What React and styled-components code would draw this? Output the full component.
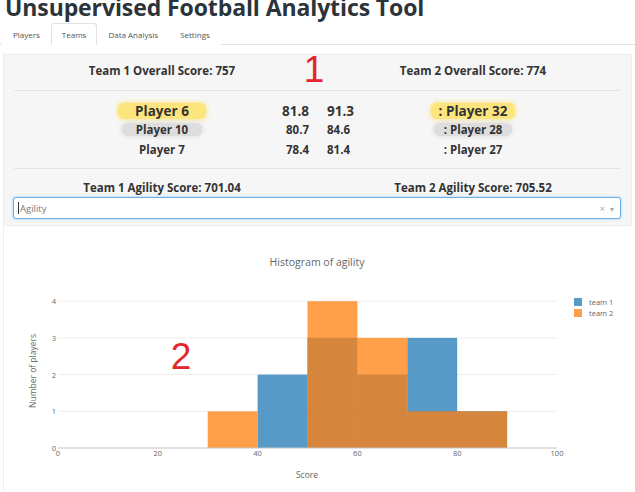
import styled, { createGlobalStyle } from 'styled-components';

const GlobalStyle = createGlobalStyle`
  body {
    margin: 0;
    background: #ffffff;
    font-family: 'Open Sans', 'Liberation Sans', sans-serif;
    color: #333;
    overflow: hidden;
  }
  * {
    box-sizing: border-box;
  }
`;

const Page = styled.div`
  width: 635px;
  height: 492px;
  overflow: hidden;
`;

const Title = styled.h1`
  margin: -7px 0 0 5px;
  font-size: 23px;
  line-height: 28px;
  font-weight: 700;
  letter-spacing: -0.1px;
  color: #2b333b;
  white-space: nowrap;
`;

const TabBar = styled.div`
  display: flex;
  margin-top: 2px;
  padding-left: 2px;
  border-bottom: 1px solid #e2e2e2;
`;

const Tab = styled.div`
  padding: 0 10px;
  height: 22px;
  line-height: 21px;
  font-size: 8px;
  color: #555;
  border: 1px solid ${p => (p.$active ? '#e2e2e2' : 'transparent')};
  border-bottom: none;
  border-radius: 3px 3px 0 0;
  background: #fff;
  margin-bottom: -1px;
`;

const Panel = styled.div`
  margin: 9px 3px 0 3px;
  background: #f6f6f6;
  border: 1px solid #ececec;
  padding: 0 10px 6px 10px;
`;

const ScoreGrid = styled.div`
  display: grid;
  grid-template-columns: 236px 38px 38px 234px;
  margin-left: 30px;
  align-items: center;
  height: ${p => p.$h}px;
  padding-top: ${p => p.$pt || 0}px;
  padding-bottom: ${p => p.$pb || 0}px;
`;

const TeamScore = styled.div`
  grid-column: ${p => p.$col};
  text-align: center;
  font-size: 11.5px;
  font-weight: 700;
  color: #333;
  white-space: nowrap;
`;

const Marker = styled.div`
  grid-column: 2 / span 2;
  text-align: center;
  font-family: 'Liberation Sans', sans-serif;
  font-size: 37px;
  line-height: 30px;
  color: #e4262c;
  margin-left: -8px;
`;

const Divider = styled.div`
  height: 1px;
  background: #e4e4e4;
`;

const PlayerBlock = styled.div`
  display: grid;
  grid-template-columns: 236px 38px 38px 234px;
  grid-template-rows: 19px 19.5px 19.5px;
  margin-left: 30px;
  padding: 10px 0 9px 0;
  align-items: center;
`;

const Cell = styled.div`
  font-size: ${p => (p.$big ? 13.5 : 11.5)}px;
  font-weight: 700;
  color: #333;
  text-align: ${p => p.$align || 'center'};
  padding: 0 ${p => (p.$align === 'right' ? 9 : 0)}px 0 ${p => (p.$align === 'left' ? 9 : 0)}px;
  white-space: nowrap;
`;

const Glow = styled.span`
  display: inline-block;
  padding: 0 ${p => p.$pad}px;
  line-height: ${p => (p.$big ? 16 : 13)}px;
  border-radius: 6px;
  background: ${p => (p.$tone === 'gold' ? '#fbe57c' : p.$tone === 'grey' ? '#dddddd' : 'transparent')};
  box-shadow: 0 0 4px 1px ${p => (p.$tone === 'gold' ? '#fbe88c' : p.$tone === 'grey' ? '#e2e2e2' : 'transparent')};
`;

const SelectBox = styled.div`
  display: flex;
  align-items: center;
  height: 22px;
  margin: 0 0 0 -1px;
  background: #fff;
  border: 1px solid #66afe9;
  border-radius: 3px;
  box-shadow: 0 0 3px rgba(102, 175, 233, 0.6);
  padding: 0 6px 0 4px;
  font-size: 9.5px;
  color: #777;
`;

const Caret = styled.span`
  width: 1px;
  height: 12px;
  background: #333;
  margin-right: 1px;
`;

const Grow = styled.span`
  flex: 1;
`;

const SelectIcon = styled.span`
  color: #aaa;
  font-size: ${p => p.$size}px;
  margin-left: 5px;
`;

const ChartCard = styled.div`
  margin: 1px 3px 0 3px;
  height: 266px;
  border-left: 1px solid #eeeeee;
  background: #fff;
`;

const players = [
  { left: 'Player 6', a: '81.8', b: '91.3', right: ': Player 32', tone: 'gold', big: true },
  { left: 'Player 10', a: '80.7', b: '84.6', right: ': Player 28', tone: 'grey' },
  { left: 'Player 7', a: '78.4', b: '81.4', right: ': Player 27', tone: 'none' },
];

const X0 = 58;
const XU = 4.99;
const Y0 = 449;
const YU = 36.7;

const team1 = [[40, 2], [50, 3], [60, 2], [70, 3], [80, 1]];
const team2 = [[30, 1], [50, 4], [60, 3], [70, 1], [80, 1]];

function Bars({ data, color }) {
  return data.map(([start, n]) => (
    <rect
      key={start}
      x={X0 + start * XU}
      y={Y0 - n * YU}
      width={10 * XU}
      height={n * YU}
      fill={color}
      opacity="0.75"
    />
  ));
}

function Histogram() {
  const axisText = { fontFamily: 'Open Sans, sans-serif', fill: '#666' };
  return (
    <svg width="628" height="264" viewBox="4 228 628 264">
      <text x="317" y="267" textAnchor="middle" fontSize="10.5" style={axisText} fill="#444">
        Histogram of agility
      </text>
      {[1, 2, 3, 4].map(k => (
        <line key={k} x1={X0} x2={X0 + 100 * XU} y1={Y0 - k * YU} y2={Y0 - k * YU} stroke="#eeeeee" strokeWidth="1" />
      ))}
      {[0, 1, 2, 3, 4].map(k => (
        <text key={k} x="56" y={Y0 - k * YU + 3} textAnchor="end" fontSize="7.5" style={axisText}>
          {k}
        </text>
      ))}
      <Bars data={team1} color="#1f77b4" />
      <Bars data={team2} color="#ff7f0e" />
      <line x1={X0} x2={X0 + 100 * XU} y1={Y0} y2={Y0} stroke="#c4c4c4" strokeWidth="1" />
      {[0, 20, 40, 60, 80, 100].map(v => (
        <text key={v} x={X0 + v * XU} y="457" textAnchor="middle" fontSize="7.5" style={axisText}>
          {v}
        </text>
      ))}
      <text x="307" y="479" textAnchor="middle" fontSize="8.5" style={axisText}>
        Score
      </text>
      <text
        x="0"
        y="0"
        transform="translate(36 372) rotate(-90)"
        textAnchor="middle"
        fontSize="8.5"
        style={axisText}
      >
        Number of players
      </text>
      <rect x="574" y="299" width="8" height="8" fill="#1f77b4" opacity="0.75" />
      <rect x="574" y="310" width="8" height="8" fill="#ff7f0e" opacity="0.75" />
      <text x="589" y="306" fontSize="7.5" style={axisText}>team 1</text>
      <text x="589" y="317" fontSize="7.5" style={axisText}>team 2</text>
      <text x="181" y="370" textAnchor="middle" fontSize="37" fontFamily="Liberation Sans, sans-serif" fill="#e4262c">
        2
      </text>
    </svg>
  );
}

export default function App() {
  return (
    <Page>
      <GlobalStyle />
      <Title>Unsupervised Football Analytics Tool</Title>
      <TabBar>
        <Tab>Players</Tab>
        <Tab $active>Teams</Tab>
        <Tab>Data Analysis</Tab>
        <Tab>Settings</Tab>
      </TabBar>

      <Panel>
        <ScoreGrid $h={35} $pb={5}>
          <TeamScore $col={1}>Team 1 Overall Score: 757</TeamScore>
          <Marker>1</Marker>
          <TeamScore $col={4}>Team 2 Overall Score: 774</TeamScore>
        </ScoreGrid>
        <Divider />
        <PlayerBlock>
          {players.map(p => (
            <>
              <Cell key={p.left} $big={p.big}>
                <Glow $tone={p.tone} $big={p.big} $pad={p.big ? 17 : 14}>{p.left}</Glow>
              </Cell>
              <Cell $big={p.big} $align="right">{p.a}</Cell>
              <Cell $big={p.big} $align="left">{p.b}</Cell>
              <Cell $big={p.big}>
                <Glow $tone={p.tone} $big={p.big} $pad={p.big ? 8 : 10}>{p.right}</Glow>
              </Cell>
            </>
          ))}
        </PlayerBlock>
        <Divider />
        <ScoreGrid $h={28} $pt={8}>
          <TeamScore $col={1}>Team 1 Agility Score: 701.04</TeamScore>
          <TeamScore $col={4}>Team 2 Agility Score: 705.52</TeamScore>
        </ScoreGrid>
        <SelectBox>
          <Caret />
          Agility
          <Grow />
          <SelectIcon $size={9}>×</SelectIcon>
          <SelectIcon $size={8}>▾</SelectIcon>
        </SelectBox>
      </Panel>

      <ChartCard>
        <Histogram />
      </ChartCard>
    </Page>
  );
}
